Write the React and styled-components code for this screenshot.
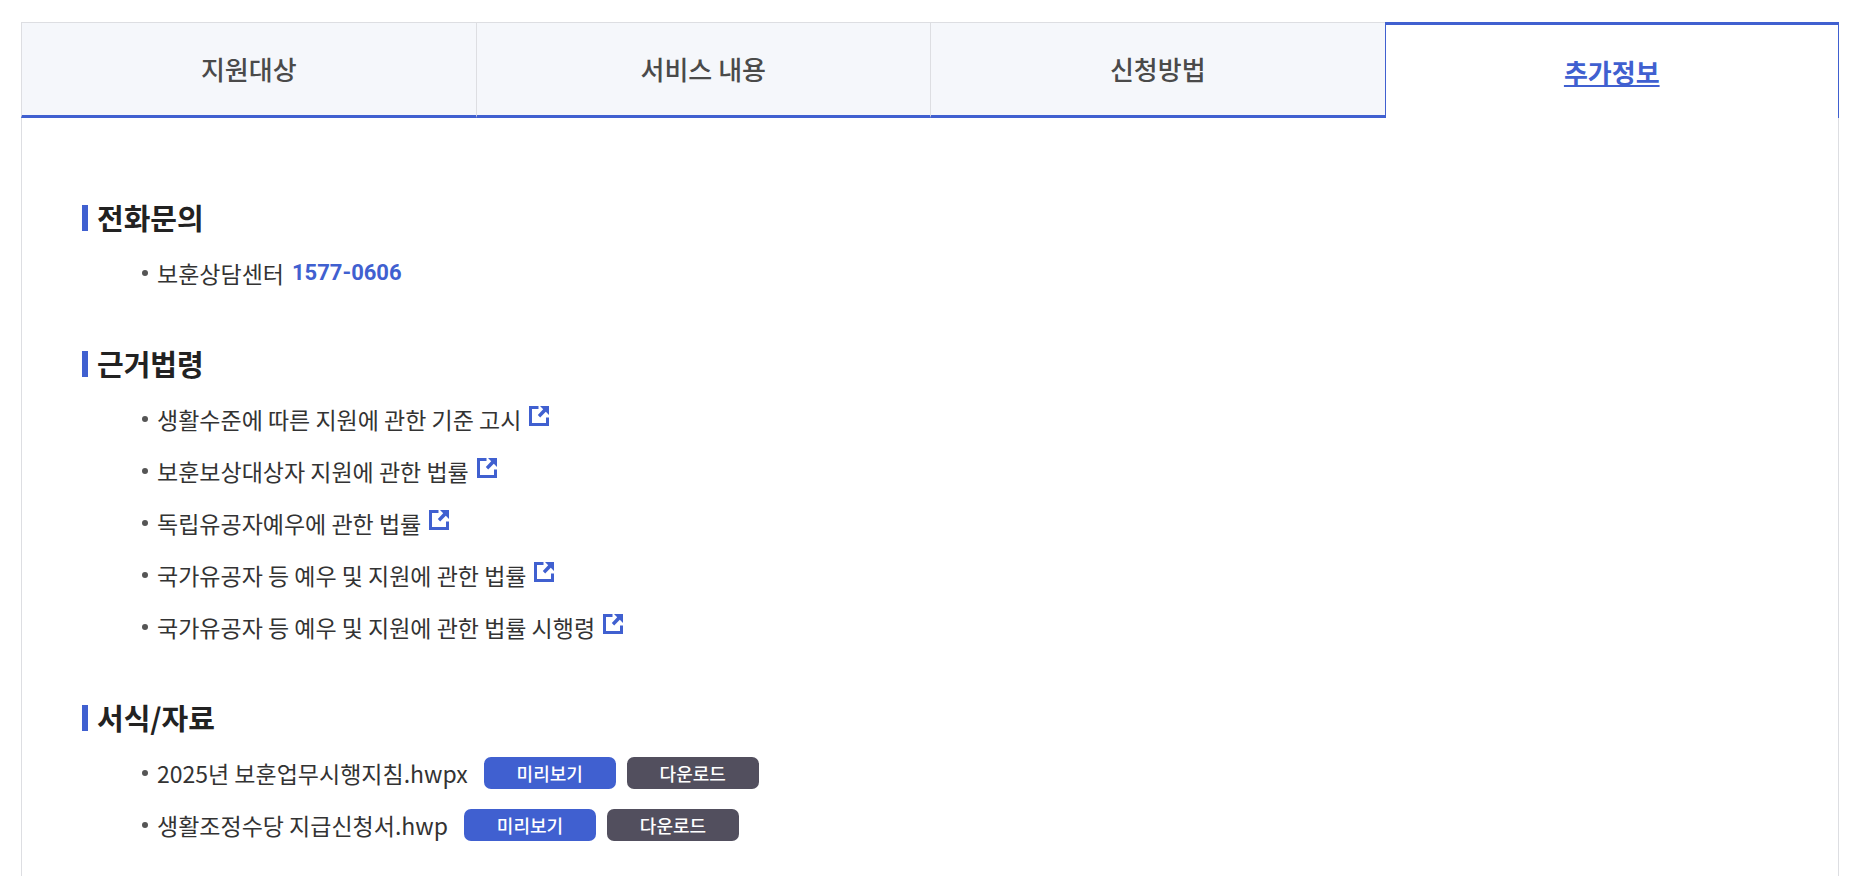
import styled, { createGlobalStyle } from 'styled-components';

const GlobalStyle = createGlobalStyle`
  :root {
    --blue: #4060d0;
    --line: #dddee2;
    --dark: #524f5e;
  }
  * {
    box-sizing: border-box;
  }
  body {
    margin: 0;
    background: #fff;
    color: #333;
    font-family: "Noto Sans CJK KR", sans-serif;
  }
  ul {
    list-style: none;
    margin: 0;
    padding: 0;
  }
`;

const PageStyles = styled.main`
  padding: 22px 18px 0 21px;
`;

const TabsStyles = styled.nav`
  display: grid;
  grid-template-columns: repeat(4, 1fr);
`;

const Tab = styled.button`
  height: 96px;
  padding: 0;
  border: solid var(--line);
  border-width: 1px 0 3px 1px;
  border-bottom-color: var(--blue);
  background: #f5f7fb;
  color: #4a4a4a;
  font-family: inherit;
  font-size: 26px;
  font-weight: 500;
  line-height: 36px;
  cursor: pointer;
  &[aria-selected='true'] {
    border: solid var(--blue);
    border-width: 3px 1px 0;
    background: #fff;
    color: var(--blue);
    font-weight: 700;
    text-decoration: underline;
    text-decoration-thickness: 2px;
    text-underline-offset: 2px;
  }
`;

const Panel = styled.div`
  border: solid var(--line);
  border-width: 0 1px;
  padding: 78px 60px 0;
`;

const SectionStyles = styled.section`
  padding-bottom: 43px;
  h2 {
    display: flex;
    align-items: center;
    gap: 9px;
    margin: 0 0 8px;
    color: #222;
    font-size: 29px;
    font-weight: 700;
    line-height: 43px;
  }
  h2::before {
    content: '';
    width: 6px;
    height: 26px;
    background: var(--blue);
  }
  ul {
    padding-left: 60px;
  }
`;

const Item = styled.li`
  display: flex;
  align-items: center;
  height: 52px;
  font-size: 23px;
  line-height: 36px;
  &::before {
    content: '';
    width: 6px;
    height: 6px;
    margin-right: 9px;
    border-radius: 50%;
    background: #555;
  }
`;

const Phone = styled.a`
  margin-left: 8px;
  color: var(--blue);
  font-family: Roboto, sans-serif;
  font-size: 22px;
  font-weight: 700;
  text-decoration: none;
`;

const LawLink = styled.a`
  display: flex;
  align-items: center;
  gap: 8px;
  color: inherit;
  text-decoration: none;
  svg {
    margin-bottom: 6px;
  }
`;

const Buttons = styled.div`
  display: flex;
  gap: 11px;
  margin-left: 16px;
`;

const FileButton = styled.button`
  width: 132px;
  height: 32px;
  padding: 0;
  border: 0;
  border-radius: 7px;
  background: ${(props) => (props.$dark ? 'var(--dark)' : 'var(--blue)')};
  color: #fff;
  font-family: inherit;
  font-size: 18px;
  font-weight: 500;
  line-height: 32px;
  cursor: pointer;
`;

const tabs = ['지원대상', '서비스 내용', '신청방법', '추가정보'];

const laws = [
  '생활수준에 따른 지원에 관한 기준 고시',
  '보훈보상대상자 지원에 관한 법률',
  '독립유공자예우에 관한 법률',
  '국가유공자 등 예우 및 지원에 관한 법률',
  '국가유공자 등 예우 및 지원에 관한 법률 시행령',
];

const files = ['2025년 보훈업무시행지침.hwpx', '생활조정수당 지급신청서.hwp'];

function ExternalIcon() {
  return (
    <svg width="20" height="20" viewBox="0 0 20 20" fill="none" aria-hidden="true">
      <path d="M9.5 1.5h-8v17h17v-7" stroke="#4060d0" strokeWidth="3" />
      <path d="M11 0h9v9l-3.2-3.2-5.6 5.6-2.4-2.4 5.4-5.8z" fill="#4060d0" />
    </svg>
  );
}

function Section({ title, children }) {
  return (
    <SectionStyles>
      <h2>{title}</h2>
      <ul>{children}</ul>
    </SectionStyles>
  );
}

export default function App() {
  return (
    <>
      <GlobalStyle />
      <PageStyles>
        <TabsStyles role="tablist">
          {tabs.map((tab) => (
            <Tab key={tab} type="button" role="tab" aria-selected={tab === '추가정보'}>
              {tab}
            </Tab>
          ))}
        </TabsStyles>
        <Panel role="tabpanel">
          <Section title="전화문의">
            <Item>
              보훈상담센터 <Phone href="tel:1577-0606">1577-0606</Phone>
            </Item>
          </Section>
          <Section title="근거법령">
            {laws.map((law) => (
              <Item key={law}>
                <LawLink href="#">
                  {law}
                  <ExternalIcon />
                </LawLink>
              </Item>
            ))}
          </Section>
          <Section title="서식/자료">
            {files.map((file) => (
              <Item key={file}>
                {file}
                <Buttons>
                  <FileButton type="button">미리보기</FileButton>
                  <FileButton type="button" $dark>
                    다운로드
                  </FileButton>
                </Buttons>
              </Item>
            ))}
          </Section>
        </Panel>
      </PageStyles>
    </>
  );
}
